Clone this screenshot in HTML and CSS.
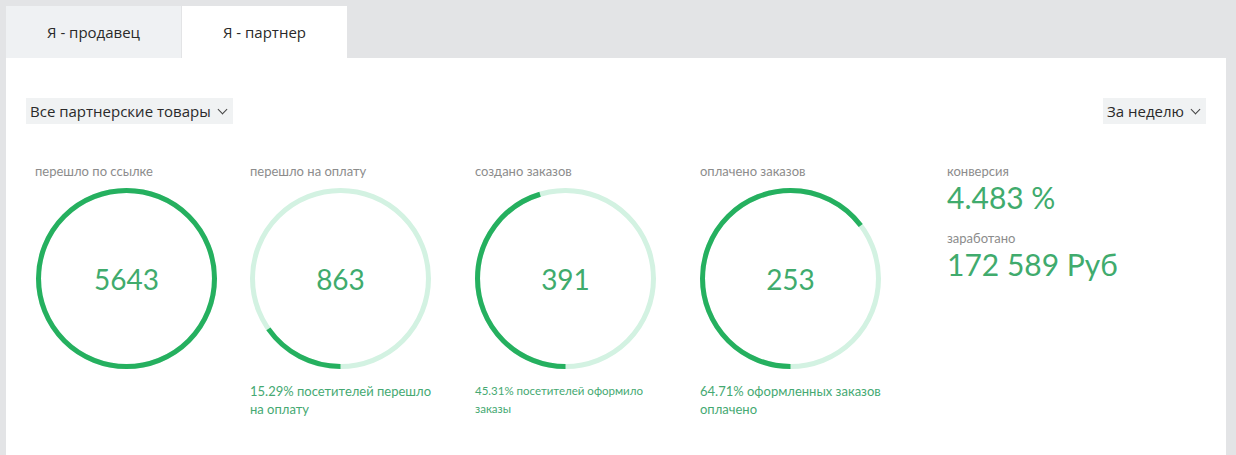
FILE: index.html
```html
<!DOCTYPE html>
<html lang="ru">
<head>
    <meta charset="UTF-8">
    <meta name="viewport" content="width=device-width, initial-scale=1.0">
    <title>Статистика партнера</title>
    <link rel="stylesheet" href="styles.css">
</head>
<body>
    <div class="tabs">
        <div class="tab">Я - продавец</div>
        <div class="tab active">Я - партнер</div>
    </div>

    <div class="panel">
        <div class="filters">
            <div class="select">Все партнерские товары <span class="caret"></span></div>
            <div class="select">За неделю <span class="caret"></span></div>
        </div>

        <div class="stats">
            <div class="stat">
                <div class="stat-label">перешло по ссылке</div>
                <div class="ring">
                    <svg viewBox="0 0 180 180" width="180" height="180">
                        <circle class="track" cx="90" cy="90" r="87.5"></circle>
                        <circle class="bar" cx="90" cy="90" r="87.5" pathLength="100" stroke-dasharray="100 100" transform="rotate(90 90 90)"></circle>
                    </svg>
                    <div class="ring-value">5643</div>
                </div>
            </div>
            <div class="stat">
                <div class="stat-label">перешло на оплату</div>
                <div class="ring">
                    <svg viewBox="0 0 180 180" width="180" height="180">
                        <circle class="track" cx="90" cy="90" r="87.5"></circle>
                        <circle class="bar" cx="90" cy="90" r="87.5" pathLength="100" stroke-dasharray="15.29 100" transform="rotate(90 90 90)"></circle>
                    </svg>
                    <div class="ring-value">863</div>
                </div>
                <div class="stat-note">15.29% посетителей перешло на оплату</div>
            </div>
            <div class="stat">
                <div class="stat-label">создано заказов</div>
                <div class="ring">
                    <svg viewBox="0 0 180 180" width="180" height="180">
                        <circle class="track" cx="90" cy="90" r="87.5"></circle>
                        <circle class="bar" cx="90" cy="90" r="87.5" pathLength="100" stroke-dasharray="45.31 100" transform="rotate(90 90 90)"></circle>
                    </svg>
                    <div class="ring-value">391</div>
                </div>
                <div class="stat-note small">45.31% посетителей оформило заказы</div>
            </div>
            <div class="stat">
                <div class="stat-label">оплачено заказов</div>
                <div class="ring">
                    <svg viewBox="0 0 180 180" width="180" height="180">
                        <circle class="track" cx="90" cy="90" r="87.5"></circle>
                        <circle class="bar" cx="90" cy="90" r="87.5" pathLength="100" stroke-dasharray="64.71 100" transform="rotate(90 90 90)"></circle>
                    </svg>
                    <div class="ring-value">253</div>
                </div>
                <div class="stat-note">64.71% оформленных заказов оплачено</div>
            </div>
            <div class="totals">
                <div class="stat-label">конверсия</div>
                <div class="total-value">4.483 %</div>
                <div class="stat-label earned">заработано</div>
                <div class="total-value">172 589 Руб</div>
            </div>
        </div>
    </div>
</body>
</html>
```

FILE: styles.css
```css
body {
    margin: 0;
    padding: 6px 10px 0 6px;
    background-color: #e3e4e6;
    font-family: Lato, "Open Sans", sans-serif;
    height: 455px;
    box-sizing: border-box;
    overflow: hidden;
}
.tabs {
    display: flex;
    gap: 1px;
    height: 52px;
}
.tab {
    display: flex;
    align-items: center;
    justify-content: center;
    width: 175px;
    background-color: #eff1f3;
    font-family: "Open Sans", sans-serif;
    font-size: 15px;
    color: #2a2a2a;
}
.tab.active {
    width: 165px;
    background-color: #fff;
}
.panel {
    box-sizing: border-box;
    height: 397px;
    padding: 40px 20px 0 20px;
    background-color: #fff;
}
.filters {
    display: flex;
    justify-content: space-between;
}
.select {
    display: flex;
    align-items: center;
    height: 26px;
    padding: 0 5px 0 4px;
    background-color: #f0f2f3;
    font-family: "Open Sans", sans-serif;
    font-size: 15px;
    color: #2a2a2a;
}
.caret {
    width: 6px;
    height: 6px;
    margin: -4px 2px 0 8px;
    border-right: 1.3px solid #444;
    border-bottom: 1.3px solid #444;
    transform: rotate(45deg);
}
.stats {
    display: grid;
    grid-template-columns: 215px 225px 225px 246px auto;
    margin-top: 39px;
    padding-left: 9px;
}
.stat-label {
    font-size: 13px;
    line-height: 16px;
    color: #8c8c8c;
}
.ring {
    display: grid;
    width: 181px;
    height: 181px;
    margin-top: 9px;
}
.stat:first-child .ring {
    margin-left: 1px;
}
.ring svg,
.ring-value {
    grid-area: 1 / 1;
}
.ring svg {
    width: 181px;
    height: 181px;
}
.track,
.bar {
    fill: none;
    stroke-width: 5;
}
.track {
    stroke: #d3f2e2;
}
.bar {
    stroke: #25b05f;
}
.ring-value {
    align-self: center;
    justify-self: center;
    font-size: 28px;
    color: #40ab6d;
}
.stat-note {
    width: 190px;
    margin-top: 13px;
    font-size: 13px;
    line-height: 18px;
    color: #45a972;
}
.stat-note.small {
    font-size: 11.5px;
}
.totals {
    padding-left: 1px;
}
.total-value {
    font-size: 30px;
    line-height: 34px;
    margin-top: 1px;
    color: #40ab6d;
}
.earned {
    margin-top: 16px;
}
```
